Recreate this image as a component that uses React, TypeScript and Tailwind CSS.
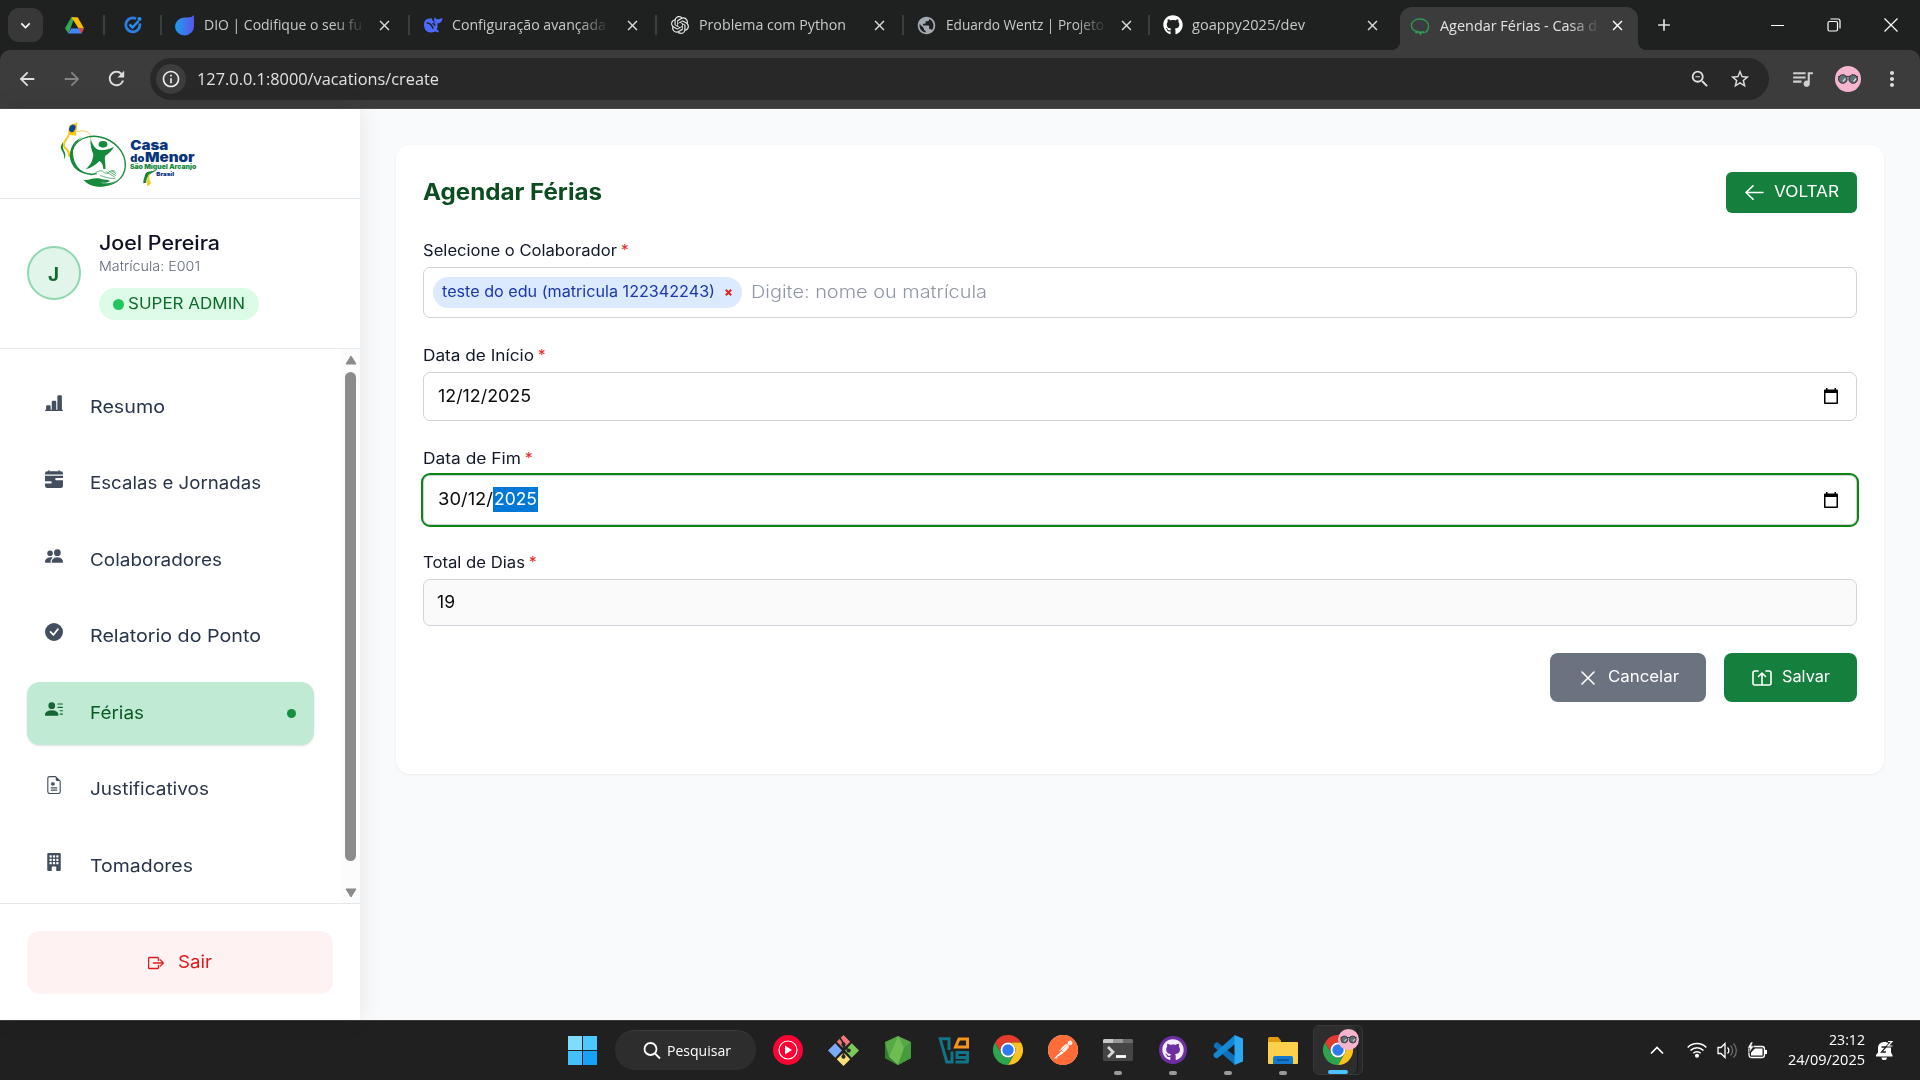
import { useLayoutEffect, useRef, type ReactNode } from "react";
import {
  BsBarChartLineFill, BsCalendarRangeFill, BsPeopleFill, BsCheckCircleFill, BsPersonLinesFill,
  BsFileEarmarkMedical, BsBuildingFill, BsBoxArrowRight,
} from "react-icons/bs";
import { FaGithub } from "react-icons/fa";
import { SiOpenai, SiPostman } from "react-icons/si";
import {
  MdArrowBack, MdArrowForward, MdRefresh, MdInfoOutline, MdZoomOut, MdStarBorder, MdQueueMusic, MdMoreVert,
  MdKeyboardArrowDown, MdClose, MdAdd, MdPublic,
} from "react-icons/md";

/* One line of text, stretched horizontally to an exact width. */
function Fit({ w, className = "", children }: { w: number; className?: string; children: ReactNode }) {
  const ref = useRef<HTMLSpanElement>(null);
  useLayoutEffect(() => {
    const el = ref.current;
    if (!el) return;
    el.style.transform = "none";
    const natural = el.getBoundingClientRect().width;
    if (natural > 0) el.style.transform = `scaleX(${w / natural})`;
  }, [w, children]);
  return (
    <span className={"block shrink-0 whitespace-nowrap " + className} style={{ width: w }}>
      <span ref={ref} className="inline-block origin-left whitespace-nowrap">{children}</span>
    </span>
  );
}

function DriveIcon() {
  return (
    <svg className="h-[17px] w-[19px]" viewBox="0 0 24 21">
      <path d="M8 0h4l-7.5 21L0 14z" fill="#34a853" />
      <path d="M8 0h8l8 14h-7z" fill="#fbbc04" />
      <path d="M4.500 20 8 14h16l-3.500 6.500H5z" fill="#4285f4" />
      <path d="M17 14h7l-3.500 6.500z" fill="#ea4335" />
      <path d="M12 6.800 8 14h8z" fill="#202120" />
    </svg>
  );
}

function TaskIcon() {
  return (
    <svg className="size-[18px]" viewBox="0 0 18 18" fill="none">
      <path d="M15.700 7.500a7 7 0 1 1-3.700-4.800" stroke="#2a7de1" strokeWidth="2.800" />
      <path d="m5.500 8.500 3 3 6-6.500" stroke="#2a8cf5" strokeWidth="2.500" />
      <circle cx="15.500" cy="3" r="2" fill="#2a8cf5" />
    </svg>
  );
}

function DioIcon() {
  return (
    <svg className="size-[21px]" viewBox="0 0 21 21">
      <defs>
        <linearGradient id="dio" x1="0" x2="1"><stop stopColor="#1c9cf0" /><stop offset="1" stopColor="#5a55e8" /></linearGradient>
      </defs>
      <path d="M20 0v11.500a9.500 9 0 1 1-9.500-9c5 0 7 0 9.500-2.500z" fill="url(#dio)" />
    </svg>
  );
}

function WhaleIcon() {
  return (
    <svg className="size-[20px]" viewBox="0 0 20 20" fill="none">
      <path d="M1 10c0-4.500 2.500-6.500 6-6.500 1 0 1.500 0 2-.5 0 2 .5 2.500 2 4 1.500 1.300 2 1 3 1 1.500 4 .5 9.500-6 9.500-4.500 0-7-3.500-7-7.500z" fill="#4d6bfe" />
      <path d="M11 5c0-1 .3-2 1-3 .5 1.500 1 2.300 2.500 2.300S17 3.800 19.500 3c-.3 3-1.500 5-4.500 5.500-2 .2-3-.5-4-3.500z" fill="#4d6bfe" />
      <path d="M3.500 8c3.500-.5 5.500 2.500 7 6M9.500 8.500c1.500 0 2.300 1 2.300 2.300" stroke="#202120" strokeWidth="1.400" />
      <path d="m10 14.500 5.500 2" stroke="#4d6bfe" strokeWidth="2" />
    </svg>
  );
}

function SiteIcon() {
  return (
    <svg className="h-[20px] w-[20px]" viewBox="0 0 20 20" fill="none">
      <path d="M7 15.500C3 14.500 1.500 12 1.500 9.500c0-4 3.500-6.500 8.500-6.500s8.500 3 8.500 7c0 3-1 5-3 6.500" stroke="#2f9b50" strokeWidth="1.300" />
      <path d="M5.500 17c2-2 4-1.500 5 .5 1-2 3-2 4-.5" stroke="#2f9b50" strokeWidth="2" />
      <path d="m2 0 4 2M8 6l5 3-3 4" stroke="#3b3a8c" strokeWidth="1.200" strokeDasharray="1.500 1.500" />
    </svg>
  );
}

function Avatar({ className }: { className: string }) {
  return (
    <svg className={className} viewBox="0 0 26 26">
      <circle cx="13" cy="13" r="13" fill="#f5b5cf" />
      <path d="M3 10.500h20" stroke="#4a3f45" strokeWidth="1.200" />
      <circle cx="7.800" cy="13" r="4.300" fill="#5d7076" stroke="#362c32" />
      <circle cx="18.200" cy="13" r="4.300" fill="#5d7076" stroke="#362c32" />
      <path d="m8 15.500 2.500-3M18.500 15.500l2.500-3" stroke="#cfe0e2" strokeWidth="1.300" />
    </svg>
  );
}

function ChromeIcon() {
  return (
    <svg className="size-[30px]" viewBox="0 0 30 30">
      <path d="M2 7.500A15 15 0 0 1 28 7.500H15A7.500 7.500 0 0 0 8.500 18.750z" fill="#e33b2e" />
      <path d="M2 7.500A15 15 0 0 1 28 7.500H15A7.500 7.500 0 0 0 8.500 18.750z" fill="#fcc31e" transform="rotate(120 15 15)" />
      <path d="M2 7.500A15 15 0 0 1 28 7.500H15A7.500 7.500 0 0 0 8.500 18.750z" fill="#2da44e" transform="rotate(240 15 15)" />
      <circle cx="15" cy="15" r="7.500" fill="#fff" />
      <circle cx="15" cy="15" r="5.700" fill="#2f7bf0" />
    </svg>
  );
}

function Logo() {
  return (
    <svg className="h-[68px] w-[137px]" viewBox="180 45 411 204" fill="none">
      <path d="m207 62 25-10-4 40-24-3z" fill="#f6c915" />
      <ellipse cx="217" cy="70" rx="9" ry="12" fill="#12458f" transform="rotate(25 217 70)" />
      <path d="M190 110c-8 10-10 18-5 26s8 12 8 27c6-10 2-20-2-28-3-8-3-14-1-25z" fill="#16863b" />
      <path d="M206 90c-4 14-20 22-13 35 6 10 18 14 14 30" stroke="#f6c915" strokeWidth="6" />
      <path d="M232 80c22-6 42 0 40 20" stroke="#f3d45c" strokeWidth="3" />
      <path d="M290 206c-46 10-84-30-74-68 10-34 46-50 84-42 44 9 78 46 76 88-2 38-36 60-78 59" stroke="#168a3c" strokeWidth="4" />
      <path d="M262 207c-38-4-60-40-50-72 6-20 18-32 34-38-20 14-28 30-27 50 2 30 20 52 43 60z" fill="#168a3c" />
      <ellipse cx="309" cy="118" rx="13" ry="10" fill="#168a3c" />
      <path d="M272 101c6 20 14 32 28 34 14 1 28-2 42-10-6 12-16 20-26 27-4 12 2 24 0 40h-6c-1-14-5-20-12-24-10 12-24 20-41 25 16-14 22-28 23-45-6-14-10-30-8-47z" fill="#168a3c" />
      <path d="M270 210c14 0 18-12 32-13 8 0 10 8 18 9M322 207c4-8 14-12 24-8M318 200l26 16M326 198l22 14M334 196l14 10M300 212c14 2 24 10 46 8" stroke="#168a3c" strokeWidth="2" />
      <path d="M250 224c16 4 26-6 46-4 10 2 14 6 26 4l8 4c-8 6-20 6-30 5 16 4 32 2 46-4-30 24-76 20-96-5z" fill="#168a3c" />
      <g fontFamily="Inter, sans-serif" fontWeight="900">
        <text x="391" y="134" fontSize="40" textLength="114" lengthAdjust="spacingAndGlyphs" fill="#0a357d">Casa</text>
        <text x="391" y="172" fontSize="29" textLength="42" lengthAdjust="spacingAndGlyphs" fill="#0a357d">do</text>
        <text x="435" y="172" fontSize="39" textLength="149" lengthAdjust="spacingAndGlyphs" fill="#0a357d">Menor</text>
        <text x="390" y="193" fontSize="19" textLength="199" lengthAdjust="spacingAndGlyphs" fill="#168a3c">São Miguel Arcanjo</text>
        <text x="469" y="214" fontSize="16" textLength="53" lengthAdjust="spacingAndGlyphs" fill="#0a357d">Brasil</text>
      </g>
      <path d="M466 198c-20 0-28 2-31 12-2 10-6 14-5 25l9-2c-1-14 7-26 27-35z" fill="#16863b" />
      <path d="M450 204c-10 10-8 20-9 40l12-8c-4-10-8-18-3-32z" fill="#f6c915" />
    </svg>
  );
}

const tabs = [
  { w: 248, icon: <DioIcon />, text: "DIO | Codifique o seu fu", tw: 158, fade: true },
  { w: 247, icon: <WhaleIcon />, text: "Configuração avançada", tw: 154, fade: true },
  { w: 247, icon: <SiOpenai className="size-[18px] text-[#e6e6e6]" />, text: "Problema com Python", tw: 147, fade: false },
  { w: 246, icon: <MdPublic className="size-[21px] text-[#a4a9b1]" />, text: "Eduardo Wentz | Projeto", tw: 158, fade: true },
  { w: 249, icon: <FaGithub className="size-[20px] text-white" />, text: "goappy2025/dev", tw: 113, fade: false },
];

function TabStrip() {
  return (
    <div className="flex h-[50px] items-center bg-[#1f2120] font-['Open_Sans',sans-serif] text-[14.5px] text-[#c9c9c9]">
      <div className="ml-[8px] flex h-[34px] w-[35px] items-center justify-center rounded-[11px] bg-[#383838]">
        <MdKeyboardArrowDown className="size-[19px] text-white" />
      </div>
      <div className="ml-[22px] flex h-[20px] w-[40px] items-center border-r-2 border-[#3c3e3d]"><DriveIcon /></div>
      <div className="flex h-[20px] w-[57px] items-center justify-center border-r-2 border-[#3c3e3d]"><TaskIcon /></div>
      {tabs.map((t, i) => (
        <div key={t.text} className={"flex h-[20px] items-center pl-[12px] " + (i < 4 ? "border-r-2 border-[#3c3e3d]" : "")} style={{ width: t.w }}>
          <div className="flex w-[21px] justify-center">{t.icon}</div>
          <div className="ml-[9px] w-[171px]">
            <Fit w={t.tw} className={t.fade ? "[mask-image:linear-gradient(to_right,black_82%,transparent_102%)]" : ""}>{t.text}</Fit>
          </div>
          <MdClose className="ml-[1px] size-[17px] text-[#dcdcdc]" />
        </div>
      ))}
      <div className="size-[9px] self-end bg-[radial-gradient(circle_at_0_0,#1f2120_9px,#3c3c3c_9.5px)] -ml-[8px]" />
      <div className="flex h-[43px] w-[238px] items-center self-end rounded-t-[12px] bg-[#3c3c3c] pb-[6px] pl-[10px] text-[#e3e3e3]">
        <SiteIcon />
        <div className="ml-[10px] w-[168px]">
          <Fit w={157} className="[mask-image:linear-gradient(to_right,black_82%,transparent_102%)]">Agendar Férias - Casa d</Fit>
        </div>
        <MdClose className="ml-[1px] size-[17px] text-white" />
      </div>
      <div className="size-[9px] self-end bg-[radial-gradient(circle_at_100%_0,#1f2120_9px,#3c3c3c_9.5px)]" />
      <MdAdd className="ml-[7px] size-[20px] text-[#e0e0e0]" />
      <div className="ml-auto mr-[22px] flex items-center gap-[43px] text-white">
        <div className="h-px w-[13px] bg-white" />
        <svg className="size-[14px]" viewBox="0 0 14 14" fill="none" stroke="currentColor" strokeWidth="1.200">
          <rect x="1" y="3.500" width="9.500" height="9.500" rx="1.500" /><path d="M3.500 1H11a2 2 0 0 1 2 2v7.500" />
        </svg>
        <svg className="size-[14px]" viewBox="0 0 14 14" stroke="currentColor" strokeWidth="1.200"><path d="m.5.5 13 13M13.500.5l-13 13" /></svg>
      </div>
    </div>
  );
}

function Toolbar() {
  return (
    <div className="bg-[#1f2120]">
      <div className="flex h-[59px] items-center rounded-t-[10px] border-b border-[#4a4a4a] bg-[#3c3c3c] text-[#dedede]">
        <MdArrowBack className="ml-[16px] mb-px size-[22px]" />
        <MdArrowForward className="ml-[23px] mb-px size-[22px] text-[#848484]" />
        <MdRefresh className="ml-[22px] mb-px size-[23px]" />
        <div className="ml-[22px] flex h-[42px] w-[1619px] items-center rounded-full bg-[#282828]">
          <div className="ml-[6px] flex size-[30px] items-center justify-center rounded-full bg-[#3d3d3d]">
            <MdInfoOutline className="size-[20px] text-[#ececec]" />
          </div>
          <Fit w={242} className="ml-[11px] font-['Open_Sans',sans-serif] text-[17px] leading-[24px] text-[#e2e2e2]">127.0.0.1:8000/vacations/create</Fit>
          <MdZoomOut className="ml-auto size-[22px]" />
          <MdStarBorder className="ml-[18px] mr-[18px] size-[22px]" />
        </div>
        <MdQueueMusic className="ml-[21px] mb-[2px] size-[25px] text-[#cfcfcf]" />
        <Avatar className="ml-[20px] mb-px size-[26px]" />
        <MdMoreVert className="ml-[19px] mb-px size-[24px]" />
      </div>
    </div>
  );
}

const nav = [
  { Icon: BsBarChartLineFill, text: "Resumo", w: 75 },
  { Icon: BsCalendarRangeFill, text: "Escalas e Jornadas", w: 171 },
  { Icon: BsPeopleFill, text: "Colaboradores", w: 132 },
  { Icon: BsCheckCircleFill, text: "Relatorio do Ponto", w: 171 },
  { Icon: BsPersonLinesFill, text: "Férias", w: 54 },
  { Icon: BsFileEarmarkMedical, text: "Justificativos", w: 119 },
  { Icon: BsBuildingFill, text: "Tomadores", w: 103 },
];

function Sidebar() {
  return (
    <aside className="z-10 flex h-full w-[360px] flex-col bg-white shadow-[0_0_22px_rgba(0,0,0,0.09)]">
      <div className="h-[90px] shrink-0 border-b border-gray-200 pl-[60px] pt-[11px]"><Logo /></div>
      <div className="flex h-[150px] shrink-0 items-center border-b border-gray-200 pl-[27px]">
        <div className="mb-[2px] flex size-[54px] items-center justify-center rounded-full border-2 border-[#8cd9af] bg-[#e1f5ea]">
          <Fit w={11} className="mt-[2px] -ml-px text-[18.5px] font-bold leading-[24px] text-[#0f6b2b]">J</Fit>
        </div>
        <div className="ml-[18px] mt-[3px] flex flex-col">
          <Fit w={121} className="text-[19.5px] font-medium leading-[26px] text-[#0f0f25]">Joel Pereira</Fit>
          <Fit w={101} className="mt-[1px] text-[13.5px] font-light leading-[18px] text-[#5f6878]">Matrícula: E001</Fit>
          <div className="mt-[13px] flex h-[32px] w-[160px] items-center rounded-full bg-[#dcfce7] pl-[14px]">
            <div className="size-[11px] rounded-full bg-[#22c55e]" />
            <Fit w={117} className="ml-[4px] text-[15.2px] leading-[20px] text-[#0f6b2b]">SUPER ADMIN</Fit>
          </div>
        </div>
      </div>
      <div className="flex h-[554px] shrink-0 overflow-hidden">
        <nav className="flex w-[341px] flex-col gap-[14px] px-[27px] pt-[27px]">
          {nav.map(({ Icon, text, w }) => {
            const on = text === "Férias";
            return (
              <div key={text} className={"flex h-[62.5px] shrink-0 items-center rounded-[13px] px-[18px] " + (on ? "bg-[#c0ead4] shadow-sm" : "")}>
                <Icon className={"mb-[9px] size-[18px] " + (on ? "text-[#166534]" : "text-[#434e5f]")} />
                <Fit w={w} className={"ml-[27px] mb-[1px] text-[17.5px] leading-[24px] " + (on ? "text-[#0b5a22]" : "text-[#273449]")}>{text}</Fit>
                {on && <div className="ml-auto size-[9px] rounded-full bg-[#15903f]" />}
              </div>
            );
          })}
        </nav>
        <div className="flex w-[19px] flex-col items-center bg-[#fcfcfc] text-[#8b8b8b]">
          <svg className="mt-[6px] h-[10px] w-[12px]" viewBox="0 0 12 10"><path d="M6 1 11 9H1z" fill="currentColor" stroke="currentColor" strokeLinejoin="round" /></svg>
          <div className="mt-[7px] h-[489px] w-[11px] rounded-full bg-[#8b8b8b]" />
          <svg className="mt-[27px] h-[10px] w-[12px]" viewBox="0 0 12 10"><path d="M6 9 11 1H1z" fill="currentColor" stroke="currentColor" strokeLinejoin="round" /></svg>
        </div>
      </div>
      <div className="flex-1 border-t border-gray-200 px-[27px] pt-[27px]">
        <div className="flex h-[63px] items-center rounded-[13px] bg-[#fef2f2] pl-[121px] text-[#dc1a1a]">
          <BsBoxArrowRight className="mt-[1px] size-[16px] stroke-[0.5]" />
          <Fit w={34} className="-mt-[2px] ml-[14px] text-[17.5px] leading-[24px]">Sair</Fit>
        </div>
      </div>
    </aside>
  );
}

function Label({ w, children }: { w: number; children: string }) {
  return (
    <div className="flex h-[22px] items-center text-[15.2px] leading-[22px] text-[#111827]">
      <Fit w={w}>{children}</Fit>
      <span className="ml-[4px] text-[#ef2b2b]">*</span>
    </div>
  );
}

function CalendarIcon() {
  return (
    <svg className="ml-auto mr-[17px] mb-px h-[16px] w-[16px]" viewBox="0 0 16 16">
      <path d="M3 0h1.500v1.500h7V0H13v1.500h1a1 1 0 0 1 1 1V15a1 1 0 0 1-1 1H2a1 1 0 0 1-1-1V2.500a1 1 0 0 1 1-1h1zM2.500 5v9.500h11V5z" fill="#000" fillRule="evenodd" />
    </svg>
  );
}

function Form() {
  return (
    <main className="flex-1 bg-[#f9fafb] pl-[36px] pr-[36px] pt-[36px]">
      <section className="flex h-[629px] flex-col rounded-[14px] bg-white px-[27px] pt-[27px] shadow-[0_1px_3px_rgba(0,0,0,0.06)]">
        <div className="flex h-[41px] items-center justify-between">
          <Fit w={179} className="mt-[-1px] text-[22.4px] font-bold leading-[30px] text-[#0b4d20]">Agendar Férias</Fit>
          <div className="flex h-[41px] w-[131px] items-center rounded-[6px] bg-[#15803d] pl-[19px] text-white">
            <svg className="h-[15px] w-[19px]" viewBox="0 0 19 15" fill="none" stroke="currentColor" strokeWidth="1.600" strokeLinecap="round" strokeLinejoin="round"><path d="M18 7.500H1M8 .8 1 7.500l7 6.700" /></svg>
            <Fit w={65} className="ml-[10px] mt-[-2px] text-[15.4px] leading-[22px]">VOLTAR</Fit>
          </div>
        </div>
        <div className="mt-[27px]"><Label w={194}>Selecione o Colaborador</Label></div>
        <div className="mt-[5px] flex h-[51px] items-center rounded-[7px] border border-[#d1d5db] pl-[9px]">
          <div className="flex h-[31px] w-[309px] items-center rounded-full bg-[#dbeafe] pl-[9px]">
            <Fit w={273} className="mt-[-1px] text-[15.2px] leading-[22px] text-[#1a37b0]">teste do edu (matricula 122342243)</Fit>
            <svg className="ml-[10px] size-[7px]" viewBox="0 0 7 7" stroke="#dc2626" strokeWidth="2"><path d="m.8.8 5.400 5.400M6.200.8.8 6.200" /></svg>
          </div>
          <Fit w={236} className="ml-[9px] mt-[-1px] text-[17.300px] font-light leading-[24px] text-[#8f97a5]">Digite: nome ou matrícula</Fit>
        </div>
        <div className="mt-[27px]"><Label w={111}>Data de Início</Label></div>
        <div className="mt-[5px] flex h-[49px] items-center rounded-[7px] border border-[#d1d5db] pl-[14px] text-[17.3px] leading-[24px] text-[#0c0c0c]">
          <Fit w={93} className="mt-[-2px]">12/12/2025</Fit>
          <CalendarIcon />
        </div>
        <div className="mt-[27px]"><Label w={98}>Data de Fim</Label></div>
        <div className="mt-[5px] flex h-[50px] items-center rounded-[7px] border border-[#d1d5db] pl-[14px] text-[17.3px] leading-[24px] text-[#0c0c0c] outline-[2.5px] outline-[#0a8412]">
          <Fit w={55} className="mt-[-2px]">30/12/</Fit>
          <div className="mt-[-2px] h-[25px] w-[45px] bg-[#0078d7] pl-[1px] text-white"><Fit w={43}>2025</Fit></div>
          <CalendarIcon />
        </div>
        <div className="mt-[27px]"><Label w={102}>Total de Dias</Label></div>
        <div className="mt-[5px] flex h-[47px] items-center rounded-[7px] border border-[#d1d5db] bg-[#fafafa] pl-[13px] text-[17.3px] leading-[24px] text-[#0c0c0c]">
          <Fit w={18} className="mt-[-2px]">19</Fit>
        </div>
        <div className="mt-[27px] flex justify-end gap-[18px] text-white">
          <div className="flex h-[49px] w-[156px] items-center rounded-[8px] bg-[#6b7280] pl-[31px]">
            <svg className="size-[14px]" viewBox="0 0 14 14" stroke="currentColor" strokeWidth="1.600" strokeLinecap="round"><path d="m1 1 12 12M13 1 1 13" /></svg>
            <Fit w={71} className="ml-[13px] mt-[-2px] text-[15.4px] leading-[22px]">Cancelar</Fit>
          </div>
          <div className="flex h-[49px] w-[133px] items-center rounded-[8px] bg-[#15803d] pl-[28px]">
            <svg className="mt-[1px] h-[16px] w-[20px]" viewBox="0 0 20 16" fill="none" stroke="currentColor" strokeWidth="1.600" strokeLinecap="round" strokeLinejoin="round"><path d="M6 1H3a2 2 0 0 0-2 2v10a2 2 0 0 0 2 2h14a2 2 0 0 0 2-2V3a2 2 0 0 0-2-2h-3M10 14V3M6.500 6.500 10 3l3.500 3.500" /></svg>
            <Fit w={48} className="ml-[10px] mt-[-2px] text-[15.4px] leading-[22px]">Salvar</Fit>
          </div>
        </div>
      </section>
    </main>
  );
}

const apps: { icon: ReactNode; run?: boolean }[] = [
  {
    icon: (
      <svg className="size-[30px]" viewBox="0 0 30 30" fill="none"><circle cx="15" cy="15" r="15" fill="#ff0033" /><circle cx="15" cy="15" r="9" stroke="#fff" strokeWidth="1.200" /><path d="m12 10.500 7 4.500-7 4.500z" fill="#fff" /></svg>
    ),
  },
  {
    icon: (
      <svg className="size-[31px]" viewBox="0 0 30 30" fill="none">
        <path d="m15 0 6.500 6.500L15 13 8.500 6.500z" fill="#f4777c" /><path d="m7 8 6.500 7L7 22 0 15z" fill="#7cacf8" /><path d="m23 8 7 7-7 7-6.500-7z" fill="#7ccb57" /><path d="m15 17 6.500 6.500L15 30l-6.500-6.500z" fill="#fde07a" />
        <path d="M11 2 15 8v13M15 10l5 5" stroke="#252525" strokeWidth="1.600" /><circle cx="15" cy="9" r="2" fill="#252525" /><circle cx="20" cy="15" r="2" fill="#252525" /><circle cx="15" cy="21" r="2" fill="#252525" />
      </svg>
    ),
  },
  {
    icon: (
      <svg className="h-[29px] w-[26px]" viewBox="0 0 26 29"><path d="m13 0 13 6v16l-13 7-13-7V6z" fill="#58a845" /><path d="m13 0 6 12-6 17L4 21z" fill="#6fbc55" /><path d="m0 6 4 15-4 1zM0 22l4-1 9 8z" fill="#2f7d32" /><path d="m26 6-7 6-6 17 13-7z" fill="#459c3c" /></svg>
    ),
  },
  {
    icon: (
      <svg className="h-[27px] w-[31px]" viewBox="0 0 31 27" fill="none" strokeWidth="3"><path d="M10.500 1.500H2.500L9 25h6V13L10.500 1.500" stroke="#10758a" strokeWidth="0" /><path d="M11 13V1.800H2.200L8.800 25H14V14.500" stroke="#10758a" /><path d="M31 15.500H19v5h10v4.500H17.500" stroke="#10758a" /><path d="M29.500 14.500V25" stroke="#10758a" /><path d="M17.500 10h12V2H21z" stroke="#f7931e" /></svg>
    ),
  },
  { icon: <ChromeIcon /> },
  { icon: <div className="rounded-full bg-white"><SiPostman className="size-[30px] text-[#ff6c37]" /></div> },
  {
    run: true,
    icon: (
      <svg className="h-[23px] w-[30px]" viewBox="0 0 30 23" fill="none"><rect width="30" height="22" rx="1.500" fill="#454545" /><path d="M0 4V1.500A1.500 1.500 0 0 1 1.500 0H10v4z" fill="#c8c8c8" /><path d="M10 0h10v4H10z" fill="#999" /><path d="M20 0h8.500A1.500 1.500 0 0 1 30 1.500V4H20z" fill="#6b6b6b" /><path d="m5 8 5 5-5 5" stroke="#d6d6d6" strokeWidth="2.800" /><path d="M13 17.500h10" stroke="#fff" strokeWidth="2.800" /></svg>
    ),
  },
  {
    run: true,
    icon: <div className="flex size-[28px] items-center justify-center rounded-full bg-[#6e2fa3]"><FaGithub className="size-[22px] text-[#f4eefa]" /></div>,
  },
  {
    run: true,
    icon: (
      <svg className="size-[30px]" viewBox="0 0 30 30"><path d="M1.500 8.500 4 7l18 14v9L.5 11.500z" fill="#0e70ba" /><path d="M.5 19 22 0v9L4 23.500 1 22z" fill="#1487d4" /><path d="m21.500 0 8.500 3.500v23L21.500 30z" fill="#2aa8f2" /></svg>
    ),
  },
  {
    run: true,
    icon: (
      <svg className="h-[27px] w-[30px]" viewBox="0 0 30 27"><path d="M0 1.500A1.500 1.500 0 0 1 1.500 0H10l3 3.500V9H0z" fill="#e29b0a" /><path d="M0 5h29a1 1 0 0 1 1 1v20a1 1 0 0 1-1 1H1a1 1 0 0 1-1-1z" fill="#fdd04b" /><path d="M5 27v-6a2 2 0 0 1 2-2h16a2 2 0 0 1 2 2v6z" fill="#1279cf" /><path d="M9 23h12" stroke="#0a4d8c" strokeWidth="1.500" /></svg>
    ),
  },
];

function Taskbar() {
  return (
    <footer className="flex h-[60px] items-center border-t border-[#3b3b3b] bg-[#202020] pb-px font-['Open_Sans',sans-serif] text-white">
      <div className="ml-[568px] grid size-[29px] grid-cols-2 gap-px">
        <div className="bg-[#7fdcfc]" /><div className="bg-[#4cc9fb]" /><div className="bg-[#44c0fa]" /><div className="bg-[#17a2f8]" />
      </div>
      <div className="ml-[18px] flex h-[40px] w-[141px] items-center rounded-full border-t border-[#3c3c3c] bg-[#2d2d2d] pl-[28px]">
        <svg className="size-[18px]" viewBox="0 0 18 18" fill="none" stroke="#fff" strokeWidth="1.800"><circle cx="7.500" cy="7" r="6" /><path d="m12 11.500 5 5" /></svg>
        <Fit w={64} className="ml-[6px] text-[14.5px] leading-[20px]">Pesquisar</Fit>
      </div>
      <div className="ml-[4.500px] flex">
        {apps.map((a, i) => (
          <div key={i} className="relative flex h-[58px] w-[55px] items-center justify-center">
            {a.icon}
            {a.run && <div className="absolute bottom-[4px] h-[4px] w-[8px] rounded-full bg-[#9a9a9a]" />}
          </div>
        ))}
        <div className="flex h-[58px] w-[55px] items-center pl-[2px]">
          <div className="relative flex h-[50px] w-[50px] items-center rounded-[6px] border border-[#383838] bg-[#272727]">
            <div className="relative flex h-full w-[44px] items-center rounded-[6px] border-r border-[#191919] bg-[#2e2e2e] pl-[9px]"><ChromeIcon /></div>
            <Avatar className="absolute left-[24px] top-[3px] size-[21px]" />
            <div className="absolute bottom-[0px] left-[14px] h-[4px] w-[20px] rounded-full bg-[#4cc2ff]" />
          </div>
        </div>
      </div>
      <div className="ml-auto mr-[26px] flex items-center">
        <svg className="h-[9px] w-[14px]" viewBox="0 0 14 9" fill="none" stroke="#fff" strokeWidth="1.700"><path d="m1 7.500 6-6 6 6" /></svg>
        <svg className="ml-[23px] h-[16px] w-[20px]" viewBox="0 0 20 16" fill="none" stroke="#fff" strokeWidth="1.500"><path d="M.7 5.500a13 13 0 0 1 18.600 0M3.500 8.500a9 9 0 0 1 13 0M6.300 11.300a5.200 5.200 0 0 1 7.400 0" /><circle cx="10" cy="13.700" r="1.300" fill="#fff" /></svg>
        <svg className="ml-[10px] h-[17px] w-[21px]" viewBox="0 0 21 17" fill="none" stroke="#fff" strokeWidth="1.300"><path d="M1 5.500h3l4-4v14l-4-4H1z" /><path d="M10.500 5.500a4 4 0 0 1 0 6" /><path d="M13.500 3.500a7 7 0 0 1 0 10M16.500 1.500a10 10 0 0 1 0 14" stroke="#6c6c6c" /></svg>
        <svg className="ml-[9px] h-[17px] w-[20px]" viewBox="0 0 20 17" fill="none"><rect x="2" y="4.500" width="15.500" height="11" rx="2.500" stroke="#fff" strokeWidth="1.300" /><path d="M8 6.500h7.500v7H4v-3z" fill="#fff" /><path d="M18 8h2v4h-2z" fill="#fff" /><path d="M4 0 .5 6H3l-1 5 5-7H4.500L6 0z" fill="#fff" stroke="#202020" strokeWidth=".5" /></svg>
        <div className="ml-[21px] flex flex-col items-end text-[14.5px] leading-[20px]">
          <Fit w={36}>23:12</Fit>
          <Fit w={77}>24/09/2025</Fit>
        </div>
        <svg className="ml-[11px] h-[20px] w-[18px]" viewBox="0 0 18 20"><path d="M0 16.500h16.500v-1.500L15 12.500V8C15 4 12 2 8.500 2S2 4 2 8v4.500L0 15z" fill="#fff" /><path d="M5.500 17.500h5.500a2.700 2.700 0 0 1-5.500 0z" fill="#fff" /><path d="M5.500 7h4.500l-4.500 5h4.500" fill="none" stroke="#202020" strokeWidth="1.300" /><path d="M12 1.500h4L12 6h4.500" fill="none" stroke="#202020" strokeWidth="3" /><path d="M12 1.500h4L12 6h4.500" fill="none" stroke="#fff" strokeWidth="1.200" /></svg>
      </div>
    </footer>
  );
}

export default function App() {
  return (
    <div className="flex h-[1080px] w-[1920px] flex-col overflow-hidden font-['Inter',sans-serif]">
      <TabStrip />
      <Toolbar />
      <div className="flex h-[911px] shrink-0">
        <Sidebar />
        <Form />
      </div>
      <Taskbar />
    </div>
  );
}
